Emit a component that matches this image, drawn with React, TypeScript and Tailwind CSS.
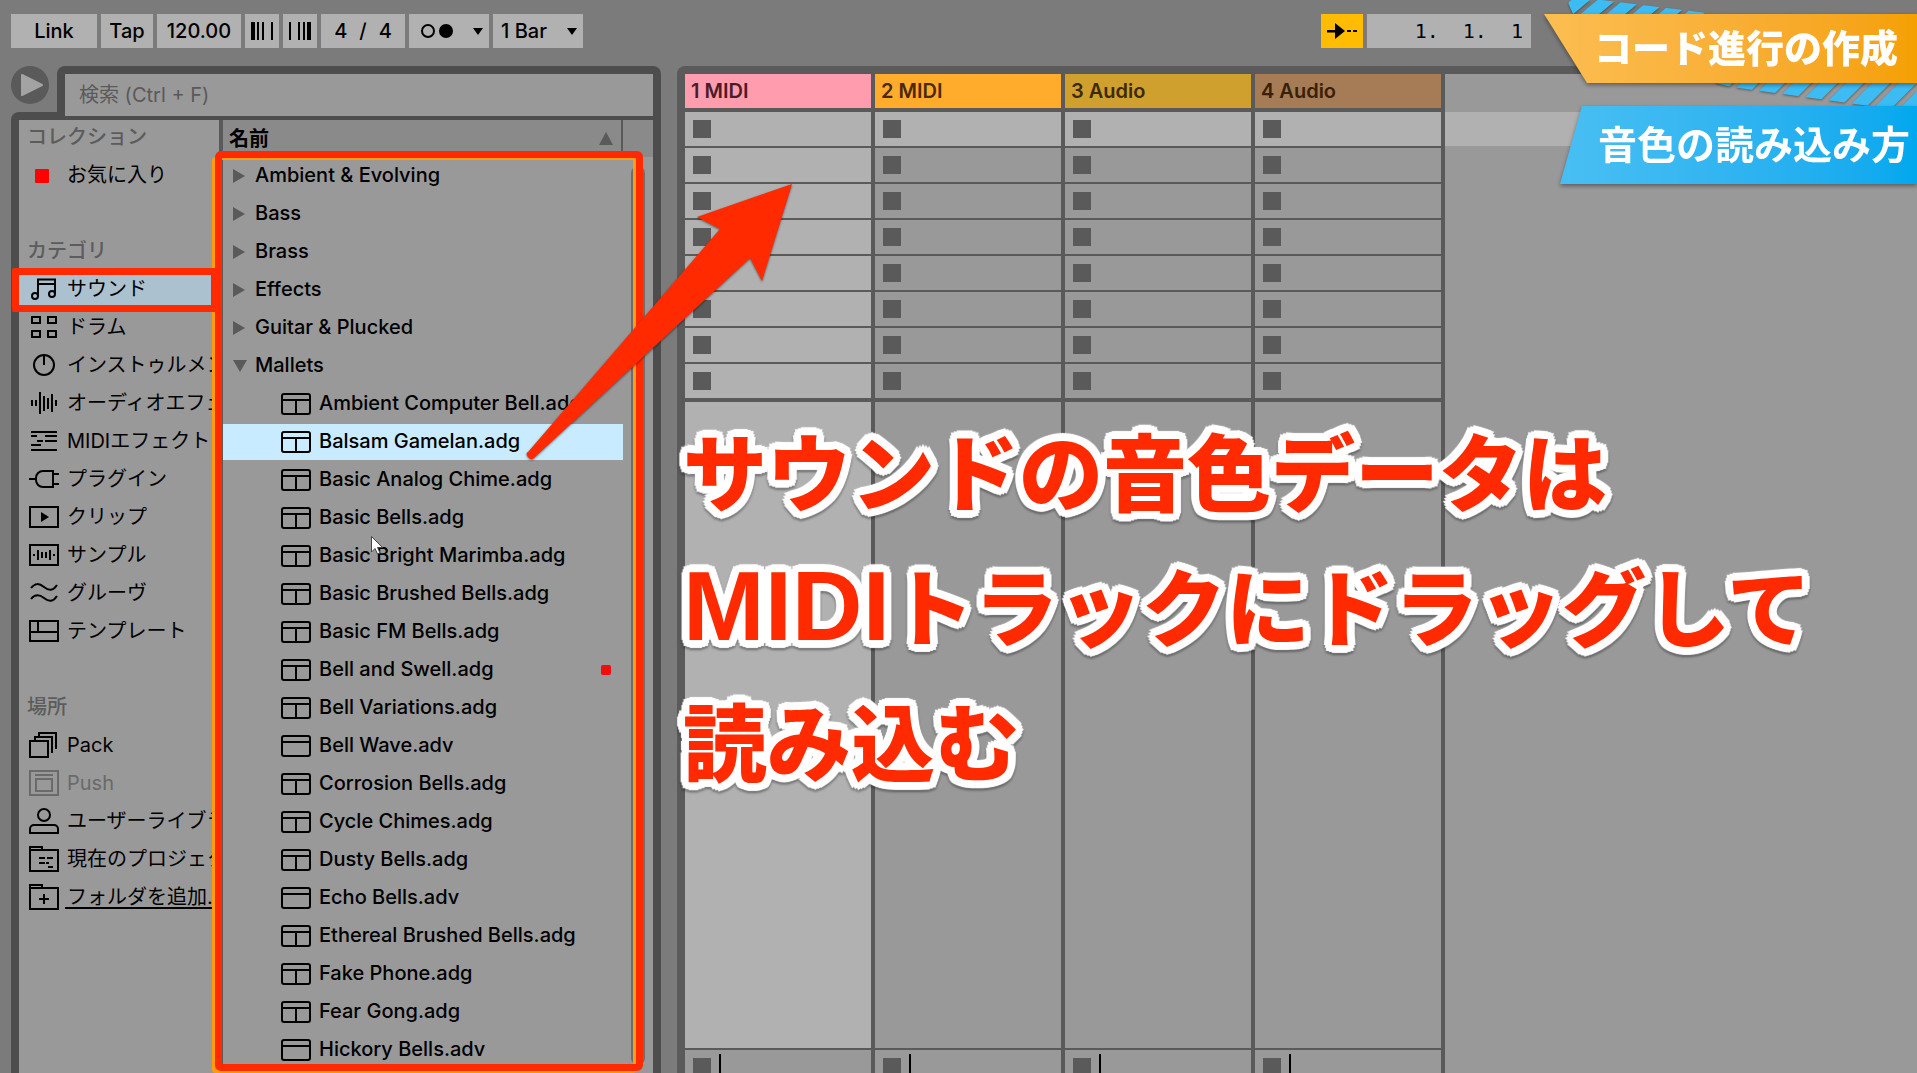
import { useState } from "react";
import type { ReactNode } from "react";

const sidebarIcons: Record<string, ReactNode> = {
    sound: (
        <>
            <path d="M9 21V4.5H26V19M9 9H26" />
            <circle cx="6" cy="21" r="3" />
            <circle cx="23" cy="19" r="3" />
        </>
    ),
    drum: <path d="M3 4h8v6H3zM19 4h8v6h-8zM3 18h8v6H3zM19 18h8v6h-8z" />,
    instrument: (
        <>
            <circle cx="15" cy="14" r="10" />
            <path d="M15 4v10" />
        </>
    ),
    audio: <path d="M3 11v6M7 11v6M11 3v22M15 7v15M19 9v11M23 5v18M27 11v6" />,
    midi: <path d="M2 5h26M2 9h6M16 9h12M8 14h6M16 14h12M2 18h10M2 23h26" />,
    plugin: <path d="M24 6H14a7 7 0 0 0-7 7v2a7 7 0 0 0 7 7h10zM0 14h7M24 9h6M24 19h6" />,
    clip: (
        <>
            <path d="M1 4h28v20H1z" />
            <path d="M12 9l8 5-8 5z" fill="currentColor" stroke="none" />
        </>
    ),
    sample: <path d="M1 4h28v20H1zM5 13v2M9 9v10M13 11v6M17 11v6M21 9v10M25 13v2" />,
    groove: <path d="M2 9c4-5 8-5 13-1s9 4 13-2M2 20c4-5 8-5 13-1s9 4 13-2" />,
    template: <path d="M1 4h28v20H1zM1 15h28M9 4v11" />,
    pack: <path d="M1 10h18v16H1zM6 10V6h17v16M10 6V2h17v16" />,
    push: <path d="M1 2h28v24H1zM6 6h18M7 10h16v12H7z" />,
    user: (
        <>
            <circle cx="15" cy="8" r="6" />
            <path d="M1 26v-4a4 4 0 0 1 4-4h20a4 4 0 0 1 4 4v4z" />
        </>
    ),
    project: <path d="M1 5V2h12v3M1 5h28v21H1zM10 13h6M18 13h6M10 18h6M17 18h3M19 22h5" />,
    addFolder: <path d="M1 5V2h12v3M1 5h28v21H1zM15 11v10M10 16h10" />,
};

const collections = [{ icon: "", label: "お気に入り" }];

const categories = [
    { icon: "sound", label: "サウンド" },
    { icon: "drum", label: "ドラム" },
    { icon: "instrument", label: "インストゥルメント" },
    { icon: "audio", label: "オーディオエフェクト" },
    { icon: "midi", label: "MIDIエフェクト" },
    { icon: "plugin", label: "プラグイン" },
    { icon: "clip", label: "クリップ" },
    { icon: "sample", label: "サンプル" },
    { icon: "groove", label: "グルーヴ" },
    { icon: "template", label: "テンプレート" },
];

const places = [
    { icon: "pack", label: "Pack" },
    { icon: "push", label: "Push", disabled: true },
    { icon: "user", label: "ユーザーライブラリ" },
    { icon: "project", label: "現在のプロジェクト" },
    { icon: "addFolder", label: "フォルダを追加...", underline: true },
];

const folders = ["Ambient & Evolving", "Bass", "Brass", "Effects", "Guitar & Plucked"];

const mallets = [
    "Ambient Computer Bell.adg",
    "Balsam Gamelan.adg",
    "Basic Analog Chime.adg",
    "Basic Bells.adg",
    "Basic Bright Marimba.adg",
    "Basic Brushed Bells.adg",
    "Basic FM Bells.adg",
    "Bell and Swell.adg",
    "Bell Variations.adg",
    "Bell Wave.adv",
    "Corrosion Bells.adg",
    "Cycle Chimes.adg",
    "Dusty Bells.adg",
    "Echo Bells.adv",
    "Ethereal Brushed Bells.adg",
    "Fake Phone.adg",
    "Fear Gong.adg",
    "Hickory Bells.adv",
];

const tracks = [
    { name: "1 MIDI", header: "bg-[#ff9cad] text-[#4a1c28]", armed: true },
    { name: "2 MIDI", header: "bg-[#ffac2d] text-[#4a2a08]", armed: false },
    { name: "3 Audio", header: "bg-[#cfa02e] text-[#3d2a08]", armed: false },
    { name: "4 Audio", header: "bg-[#a57c55] text-[#3a2008]", armed: false },
];

const slots = [0, 1, 2, 3, 4, 5, 6, 7];

function DownArrow() {
    return (
        <svg className="pointer-events-none h-[7px] w-[10px] shrink-0" viewBox="0 0 10 7">
            <path d="M0 0h10L5 7z" />
        </svg>
    );
}

function NudgeBars(props: { flip?: boolean }) {
    return (
        <svg className={props.flip ? "h-[18px] w-[22px] -scale-x-100" : "h-[18px] w-[22px]"} viewBox="0 0 22 18">
            <path d="M0 0h4v18H0zM6 0h2v18H6zM11 0h2v18h-2zM20 0h2v18h-2z" />
        </svg>
    );
}

function Toolbar() {
    return (
        <header className="flex h-[66px] shrink-0 gap-1 pt-[14px] pr-[386px] pl-[11px] text-xl text-black">
            <button className="h-[34px] w-[86px] bg-[#b1b1b1]">Link</button>
            <button className="h-[34px] w-[52px] bg-[#b1b1b1]">Tap</button>
            <input aria-label="Tempo" className="h-[34px] w-[84px] bg-[#b1b1b1] text-center" defaultValue="120.00" />
            <button aria-label="Nudge down" className="flex h-[34px] w-[34px] items-center justify-center bg-[#b1b1b1]">
                <NudgeBars />
            </button>
            <button aria-label="Nudge up" className="flex h-[34px] w-[34px] items-center justify-center bg-[#b1b1b1]">
                <NudgeBars flip />
            </button>
            <button className="flex h-[34px] w-[84px] items-center justify-center gap-3 bg-[#b1b1b1]">
                <span>4</span>
                <span>/</span>
                <span>4</span>
            </button>
            <button aria-label="Metronome" className="flex h-[34px] w-[80px] items-center justify-between bg-[#b1b1b1] pr-1.5 pl-3">
                <svg className="h-4 w-8" viewBox="0 0 32 16">
                    <circle cx="7" cy="8" r="6" fill="none" stroke="black" strokeWidth="2" />
                    <circle cx="25" cy="8" r="7" />
                </svg>
                <DownArrow />
            </button>
            <div className="flex h-[34px] w-[90px] items-center bg-[#b1b1b1] pr-1.5">
                <select aria-label="Quantization" className="h-full min-w-0 flex-1 appearance-none pl-2">
                    <option>1 Bar</option>
                </select>
                <DownArrow />
            </div>
            <button aria-label="Follow" className="ml-auto flex h-[34px] w-[42px] items-center justify-center bg-[#ffbc00]">
                <svg className="h-4 w-[30px]" viewBox="0 0 30 16">
                    <path d="M0 7h8V0l10 8-10 8V9.5H0zM20 7h4v2h-4zM26 7h4v2h-4z" />
                </svg>
            </button>
            <input aria-label="Position" className="h-[34px] w-[164px] bg-[#b1b1b1] pr-2 text-right font-['DejaVu_Sans_Mono',monospace]" defaultValue="1.  1.  1" />
        </header>
    );
}

function SidebarItem(props: { icon: string; label: string; active?: boolean; disabled?: boolean; underline?: boolean; onClick: () => void }) {
    const color = props.disabled ? "text-[#6a6a6a]" : "text-black";
    const background = props.active ? "bg-[#abc1cf]" : "";
    const border = props.underline ? "border-black" : "border-transparent";

    return (
        <li className="pb-0.5">
            <button disabled={props.disabled} onClick={props.onClick} className={`flex h-9 w-full items-center gap-1.5 overflow-hidden pl-2.5 whitespace-nowrap ${color} ${background}`}>
                <svg className="h-[30px] w-[30px] shrink-0" viewBox="0 0 30 30" fill="none" stroke="currentColor" strokeWidth="2">
                    {props.icon ? sidebarIcons[props.icon] : <rect x="6" y="8" width="14" height="14" rx="1" fill="#ff0000" stroke="none" />}
                </svg>
                <span className={`border-b-2 pl-0.5 leading-5 ${border}`}>{props.label}</span>
            </button>
        </li>
    );
}

function Sidebar() {
    const [active, setActive] = useState("サウンド");

    const groups = [
        { title: "コレクション", items: collections },
        { title: "カテゴリ", items: categories },
        { title: "場所", items: places },
    ];

    return (
        <nav className="w-[200px] shrink-0 overflow-hidden bg-[#999999] font-normal">
            {groups.map((group) => (
                <section key={group.title} className="pb-[38px]">
                    <h2 className="h-[38px] pl-2 leading-[34px] font-medium text-[#5c5c5c]">{group.title}</h2>
                    <ul>
                        {group.items.map((item) => (
                            <SidebarItem key={item.label} {...item} active={item.label === active} onClick={() => setActive(item.label)} />
                        ))}
                    </ul>
                </section>
            ))}
        </nav>
    );
}

function PresetIcon(props: { rack: boolean }) {
    return (
        <svg className="h-[22px] w-[30px] shrink-0" viewBox="0 0 30 22" fill="none" stroke="black" strokeWidth="2">
            <rect x="1" y="1" width="28" height="20" rx="2" />
            <path d={props.rack ? "M1 7h28M15 7v14" : "M1 7h28"} />
        </svg>
    );
}

function FileList() {
    const [selected, setSelected] = useState("Balsam Gamelan.adg");

    return (
        <div className="flex min-w-0 flex-1 flex-col bg-[#999999]">
            <div className="flex h-[37px] shrink-0 bg-[#8a8a8a]">
                <button className="flex flex-1 items-center justify-between border-r-2 border-[#5a5a5a] pr-2 pl-1.5 font-bold text-black">
                    名前
                    <svg className="h-[13px] w-[14px]" viewBox="0 0 14 13">
                        <path d="M7 0l7 13H0z" fill="#5a5a5a" />
                    </svg>
                </button>
                <div className="w-[30px]" />
            </div>
            <div className="flex min-h-0 flex-1 pt-px">
                <ul className="min-w-0 flex-1 overflow-hidden text-black">
                    {folders.map((folder) => (
                        <li key={folder} className="mb-0.5">
                            <button className="flex h-9 w-full items-center gap-2.5 pl-2.5">
                                <svg className="h-[14px] w-3" viewBox="0 0 12 14">
                                    <path d="M0 0l12 7-12 7z" fill="#5a5a5a" />
                                </svg>
                                <span className="pb-0.5">{folder}</span>
                            </button>
                        </li>
                    ))}
                    <li>
                        <button className="mb-0.5 flex h-9 w-full items-center gap-2 pl-2.5">
                            <svg className="h-3 w-[14px]" viewBox="0 0 14 12">
                                <path d="M0 0h14L7 12z" fill="#5a5a5a" />
                            </svg>
                            <span className="pb-0.5">Mallets</span>
                        </button>
                        <ul>
                            {mallets.map((file) => (
                                <li key={file} className="mb-0.5">
                                    <button onClick={() => setSelected(file)} className={`flex h-9 w-full items-center gap-2 pr-3 pl-[58px] whitespace-nowrap ${file === selected ? "bg-[#c8ebff]" : ""}`}>
                                        <PresetIcon rack={file.endsWith(".adg")} />
                                        <span className="pb-0.5">{file}</span>
                                        {file === "Bell and Swell.adg" && <span className="ml-auto h-2.5 w-2.5 rounded-xs bg-[#ee1010]" />}
                                    </button>
                                </li>
                            ))}
                        </ul>
                    </li>
                </ul>
                <div className="w-[30px] shrink-0 px-2 pt-2 pb-2">
                    <div className="h-full w-[14px] rounded-full bg-[#6e6e6e]" />
                </div>
            </div>
        </div>
    );
}

function Browser() {
    return (
        <section className="flex w-[650px] shrink-0 flex-col">
            <div className="flex h-[54px] shrink-0">
                <div className="flex w-[46px] flex-col justify-between">
                    <button aria-label="Preview" className="h-[38px] w-[38px] rounded-full bg-[#5a5a5a]">
                        <svg viewBox="0 0 38 38">
                            <path d="M11 9l20 10-20 10z" fill="#a3a3a3" stroke="#a3a3a3" strokeWidth="2" strokeLinejoin="round" />
                        </svg>
                    </button>
                    <div className="h-2 rounded-tl-lg bg-[#4d4d4d]" />
                </div>
                <div className="flex-1 rounded-t-lg bg-[#4d4d4d] px-2 pt-2 pb-1">
                    <input aria-label="検索" placeholder="検索 (Ctrl + F)" className="h-full w-full bg-[#999999] px-3.5 font-normal placeholder:text-[#5a5a5a]" />
                </div>
            </div>
            <div className="relative flex min-h-0 flex-1 border-x-8 border-[#4d4d4d]">
                <Sidebar />
                <div className="w-1 shrink-0 bg-[#5a5a5a]" />
                <FileList />
                {/* highlight frames over the category and the list */}
                <div className="pointer-events-none absolute top-[37px] bottom-0 left-[193px] w-[424px] rounded-sm border-[3px] border-[#ff9d0a]" />
                <div className="pointer-events-none absolute top-[31px] bottom-0.5 left-[196px] w-[428px] rounded-md border-[7px] border-[#ff2a00]" />
                <div className="pointer-events-none absolute top-[148px] -left-[7px] h-11 w-[206px] rounded-xs border-[7px] border-[#ff2a00]" />
            </div>
        </section>
    );
}

function TrackColumn(props: { name: string; header: string; armed: boolean }) {
    return (
        <div className="mr-1 flex w-[186px] shrink-0 flex-col">
            <h3 className={`mb-1 h-[34px] shrink-0 pl-1.5 leading-[34px] font-semibold ${props.header}`}>{props.name}</h3>
            <div className="mb-1 flex flex-col gap-0.5">
                {slots.map((slot) => (
                    <div key={slot} className={`flex h-[34px] items-center pl-2 ${props.armed || slot === 0 ? "bg-[#b1b1b1]" : "bg-[#999999]"}`}>
                        <button aria-label="Stop clip" className="h-[18px] w-[18px] bg-[#5a5a5a]" />
                    </div>
                ))}
            </div>
            <div className={`mb-0.5 flex-1 ${props.armed ? "bg-[#b1b1b1]" : "bg-[#999999]"}`} />
            <div className="flex h-[23px] shrink-0 gap-2 overflow-hidden bg-[#999999] pl-2">
                <button aria-label="Stop track" className="mt-2 h-[18px] w-[18px] bg-[#5a5a5a]" />
                <div className="mt-1 w-0.5 bg-black" />
            </div>
        </div>
    );
}

function Session() {
    return (
        <section className="flex min-w-0 flex-1 overflow-hidden rounded-tl-lg bg-[#5a5a5a] pt-2 pl-2">
            {tracks.map((track) => (
                <TrackColumn key={track.name} {...track} />
            ))}
            <div className="flex-1 bg-[#999999] pt-[38px]">
                <div className="h-[34px] bg-[#b1b1b1]" />
            </div>
        </section>
    );
}

function Banners() {
    const upper = [-35, 43, 121, 199, 277, 355, 433];
    const lower = [532, 610, 689, 768, 847, 926, 1005, 1084, 1163];

    return (
        <div className="pointer-events-none absolute top-0 right-0 w-[380px] pt-[14px] font-['Noto_Sans_CJK_JP',sans-serif] text-white">
            <svg className="absolute top-0 left-0 h-[114px] w-[380px] drop-shadow-[0_1px_1px_#00000066]" viewBox="0 0 1140 342" fill="#3dbcf4">
                <clipPath id="upper">
                    <path d="M92 0H195L505 38V46H110L96 15z" />
                </clipPath>
                <clipPath id="lower">
                    <path d="M500 240H1140V338L1040 324 580 260z" />
                </clipPath>
                <g clipPath="url(#upper)">
                    {upper.map((x) => (
                        <path key={x} d={`M${x + 60} 0h56l-50 42h-56z`} />
                    ))}
                </g>
                <g clipPath="url(#lower)">
                    {lower.map((x) => (
                        <path key={x} d={`M${x + 10} 240h54l-100 100h-54z`} />
                    ))}
                </g>
            </svg>
            <div className="relative ml-[7px] drop-shadow-[0_2px_2px_#00000066]">
                <p className="h-[69px] bg-linear-to-r from-[#fcbe51] to-[#f5a000] pl-[50px] text-[38px] leading-[64px] font-black whitespace-nowrap [clip-path:polygon(0_0,100%_0,100%_100%,43px_100%)]">コード進行の作成</p>
            </div>
            <div className="relative mt-[23px] ml-[23px] drop-shadow-[0_2px_2px_#00000066]">
                <p className="h-[78px] bg-linear-to-r from-[#48bff3] to-[#00a8ee] pl-[38px] text-[39px] leading-[72px] font-bold whitespace-nowrap [clip-path:polygon(22px_0,100%_0,100%_100%,0_100%)]">音色の読み込み方</p>
            </div>
        </div>
    );
}

function Annotations() {
    return (
        <>
            <svg className="pointer-events-none absolute top-[180px] left-[520px] h-[290px] w-[280px] drop-shadow-[0_1px_1px_#00000080]" viewBox="520 180 280 290">
                <path d="M792 184L762 281 750 258 534 458Q531 461 528 457T528 452L720 229 697 217z" fill="#ff2a00" />
            </svg>
            <p className="pointer-events-none absolute top-[401px] left-[683px] font-['Noto_Sans_CJK_JP',sans-serif] text-[84px] leading-[135px] font-black whitespace-nowrap text-[#ff2a00] drop-shadow-[0_2px_1px_#00000066] [text-shadow:8px_0_1px_white,7px_3px_1px_white,6px_6px_1px_white,3px_7px_1px_white,0_8px_1px_white,-3px_7px_1px_white,-6px_6px_1px_white,-7px_3px_1px_white,-8px_0_1px_white,-7px_-3px_1px_white,-6px_-6px_1px_white,-3px_-7px_1px_white,0_-8px_1px_white,3px_-7px_1px_white,6px_-6px_1px_white,7px_-3px_1px_white]">
                サウンドの音色データは
                <br />
                <span className="font-['Liberation_Sans',sans-serif] text-[98px] leading-none font-bold">MIDI</span>トラックにドラッグして
                <br />
                読み込む
            </p>
            <svg className="pointer-events-none absolute top-[535px] left-[370px] h-[22px] w-[16px]" viewBox="0 0 16 22">
                <path d="M1.500 1.500V17L5 13.500 7.500 19 10 18 7.500 12.500H12.500z" fill="white" stroke="#444" strokeWidth="1" />
            </svg>
        </>
    );
}

export default function App() {
    return (
        <div className="relative flex h-screen flex-col overflow-hidden bg-[#7b7b7b] font-['Inter','Noto_Sans_CJK_JP',sans-serif] text-xl font-medium">
            <Toolbar />
            <main className="flex min-h-0 flex-1 gap-4 pl-[11px]">
                <Browser />
                <Session />
            </main>
            <Banners />
            <Annotations />
        </div>
    );
}
